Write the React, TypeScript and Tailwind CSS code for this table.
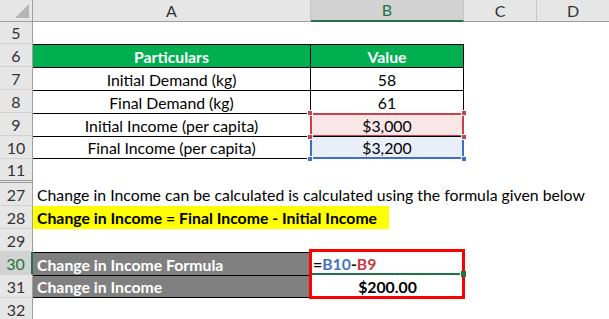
import React from "react";

const RowHead = ({ n, selected = false, last = false }: { n: string; selected?: boolean; last?: boolean }) => (
  <div
    className={`w-[33px] shrink-0 flex items-center justify-center pt-[1px] border-r text-[16px] ${
      selected ? "bg-[#d2d2d2] border-r-2 border-r-[#217346] text-[#217346]" : "bg-[#e6e6e6] border-r-[#9f9f9f] text-[#333]"
    } ${last ? "border-b-[3px] border-double border-b-[#9f9f9f]" : "border-b border-b-[#d0d0d0]"}`}
  >
    {n}
  </div>
);

const Corner = ({ x, y, color }: { x: string; y: string; color: string }) => (
  <span className={`absolute w-[6px] h-[6px] border border-white ${x} ${y} ${color} z-10`} />
);

export default function App() {
  return (
    <div className="w-[609px] h-[319px] overflow-hidden bg-white font-[Lato,sans-serif] text-[15.8px] text-black leading-none">
      {/* column headers */}
      <div className="flex h-[22px] text-[#333] text-[16px]">
        <div className="w-[33px] shrink-0 bg-[#e6e6e6] border-r border-b border-[#9f9f9f] relative">
          <svg className="absolute right-[3px] bottom-[3px]" width="14" height="14" viewBox="0 0 14 14">
            <polygon points="14,0 14,14 0,14" fill="#b4b4b4" />
          </svg>
        </div>
        <div className="w-[278px] bg-[#e6e6e6] border-r border-b border-r-[#c6c6c6] border-b-[#9f9f9f] flex items-center justify-center">A</div>
        <div className="w-[153px] bg-[#d2d2d2] border-r border-r-[#c6c6c6] border-b-2 border-b-[#217346] flex items-center justify-center text-[#217346]">B</div>
        <div className="w-[73px] bg-[#e6e6e6] border-r border-b border-r-[#c6c6c6] border-b-[#9f9f9f] flex items-center justify-center">C</div>
        <div className="flex-1 bg-[#e6e6e6] border-b border-b-[#9f9f9f] flex items-center justify-center">D</div>
      </div>

      {/* row 5 */}
      <div className="flex h-[22px]">
        <RowHead n="5" />
        <div className="flex-1" />
      </div>

      {/* row 6 */}
      <div className="flex h-[23px]">
        <RowHead n="6" />
        <div className="w-[278px] bg-[#00b050] border-t border-r border-black flex items-center justify-center pt-[1px] text-white font-bold">Particulars</div>
        <div className="w-[153px] bg-[#00b050] border-t border-r border-black flex items-center justify-center pt-[1px] text-white font-bold">Value</div>
      </div>

      {[
        ["7", "Initial Demand (kg)", "58"],
        ["8", "Final Demand (kg)", "61"],
      ].map(([n, a, b]) => (
        <div key={n} className="flex h-[23px]">
          <RowHead n={n} />
          <div className="w-[278px] border-t border-r border-black flex items-center justify-center pt-[1px]">{a}</div>
          <div className="w-[153px] border-t border-r border-black flex items-center justify-center pt-[1px]">{b}</div>
        </div>
      ))}

      {/* row 9 */}
      <div className="flex h-[23px]">
        <RowHead n="9" />
        <div className="w-[278px] border-t border-r border-black flex items-center justify-center pt-[1px]">Initial Income (per capita)</div>
        <div className="w-[153px] border-t border-r border-black relative bg-[#f9e7e8] flex items-center justify-center pt-[1px]">
          <span className="absolute inset-[-1px] border-2 border-[#c8414a]" />
          <Corner x="left-[-4px]" y="top-[-4px]" color="bg-[#c8414a]" />
          <Corner x="right-[-4px]" y="top-[-4px]" color="bg-[#c8414a]" />
          <Corner x="left-[-4px]" y="bottom-[-4px]" color="bg-[#c8414a]" />
          <Corner x="right-[-4px]" y="bottom-[-4px]" color="bg-[#c8414a]" />
          <span className="relative">$3,000</span>
        </div>
      </div>

      {/* row 10 */}
      <div className="flex h-[23px]">
        <RowHead n="10" />
        <div className="w-[278px] border-t border-b border-r border-black flex items-center justify-center pt-[1px]">Final Income (per capita)</div>
        <div className="w-[153px] border-t border-b border-r border-black relative bg-[#e8eff9] flex items-center justify-center pt-[1px]">
          <span className="absolute left-[-1px] right-[-1px] top-[1px] bottom-[-1px] border-2 border-t-0 border-[#3f6fc6]" />
          <Corner x="left-[-4px]" y="bottom-[-4px]" color="bg-[#3f6fc6]" />
          <Corner x="right-[-4px]" y="bottom-[-4px]" color="bg-[#3f6fc6]" />
          <span className="relative">$3,200</span>
        </div>
      </div>

      {/* row 11 */}
      <div className="flex h-[24px]">
        <RowHead n="11" last />
        <div className="flex-1" />
      </div>

      {/* row 27 */}
      <div className="flex h-[23px]">
        <RowHead n="27" />
        <div className="flex-1 flex items-center pt-[1px] pl-[4px] whitespace-nowrap">
          Change in Income can be calculated is calculated using the formula given below
        </div>
      </div>

      {/* row 28 */}
      <div className="flex h-[23px]">
        <RowHead n="28" />
        <div className="w-[356px] bg-[#ffff00] flex items-center pt-[1px] pl-[4px] font-bold whitespace-nowrap">
          Change in Income = Final Income - Initial Income
        </div>
      </div>

      {/* row 29 */}
      <div className="flex h-[23px]">
        <RowHead n="29" />
        <div className="flex-1" />
      </div>

      {/* row 30 */}
      <div className="flex h-[23px]">
        <RowHead n="30" selected />
        <div className="w-[278px] bg-[#808080] border-t border-black flex items-center pt-[1px] pl-[4px] text-white font-bold">Change in Income Formula</div>
        <div className="w-[153px] relative flex items-center pt-[1px] pl-[2px] font-bold">
          <span className="absolute left-0 top-[21px] w-[150px] h-[2px] bg-[#217346]" />
          <span className="absolute left-[-2px] top-[-3px] w-[156px] h-[50px] border-[3px] border-[#ff0000] z-10" />
          <span className="absolute left-[149px] top-[19px] w-[6px] h-[6px] bg-[#217346] border-l border-white z-20" />
          <span className="relative">
            =<span className="text-[#4472c4]">B10</span>-<span className="text-[#c8393f]">B9</span>
          </span>
        </div>
      </div>

      {/* row 31 */}
      <div className="flex h-[23px]">
        <RowHead n="31" />
        <div className="w-[278px] bg-[#808080] border-t border-b border-black flex items-center pt-[1px] pl-[4px] text-white font-bold">Change in Income</div>
        <div className="w-[153px] flex items-center justify-center pt-[1px] font-bold">$200.00</div>
      </div>

      {/* row 32 */}
      <div className="flex h-[23px]">
        <RowHead n="32" />
        <div className="flex-1" />
      </div>
    </div>
  );
}
